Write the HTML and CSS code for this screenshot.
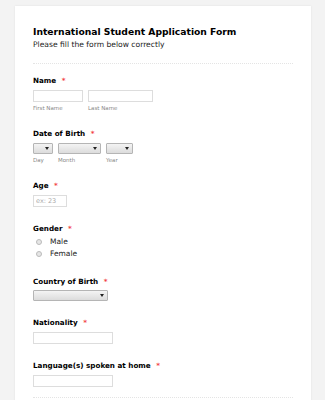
FILE: index.html
```html
<!DOCTYPE html>
<html>

<head>
    <meta charset="utf-8">
    <title>International Student Application Form</title>
    <meta name="viewport" content="width=device-width, initial-scale=1">
    <link rel="stylesheet" href="styles.css">
</head>

<body>
    <div class="form-all">
        <div class="form-header">
            <h1 class="form-title">International Student Application Form</h1>
            <div class="form-subtitle">Please fill the form below correctly</div>
        </div>

        <ul class="form-section">
            <li class="form-line">
                <label class="form-label">Name <span class="req">*</span></label>
                <div class="form-row">
                    <div class="sub">
                        <input class="form-text w-first" type="text">
                        <span class="sublabel">First Name</span>
                    </div>
                    <div class="sub">
                        <input class="form-text w-last" type="text">
                        <span class="sublabel">Last Name</span>
                    </div>
                </div>
            </li>

            <li class="form-line">
                <label class="form-label">Date of Birth <span class="req">*</span></label>
                <div class="form-row">
                    <div class="sub">
                        <span class="form-select w-day"><i class="arrow"></i></span>
                        <span class="sublabel">Day</span>
                    </div>
                    <div class="sub">
                        <span class="form-select w-month"><i class="arrow"></i></span>
                        <span class="sublabel">Month</span>
                    </div>
                    <div class="sub">
                        <span class="form-select w-year"><i class="arrow"></i></span>
                        <span class="sublabel">Year</span>
                    </div>
                </div>
            </li>

            <li class="form-line">
                <label class="form-label">Age <span class="req">*</span></label>
                <input class="form-text w-age" type="text" placeholder="ex: 23">
            </li>

            <li class="form-line">
                <label class="form-label tight">Gender <span class="req">*</span></label>
                <div class="radio-list">
                    <label class="radio"><span class="dot"></span>Male</label>
                    <label class="radio"><span class="dot"></span>Female</label>
                </div>
            </li>

            <li class="form-line">
                <label class="form-label select-label">Country of Birth <span class="req">*</span></label>
                <span class="form-select w-country"><i class="arrow"></i></span>
            </li>

            <li class="form-line">
                <label class="form-label">Nationality <span class="req">*</span></label>
                <input class="form-text w-wide" type="text">
            </li>

            <li class="form-line">
                <label class="form-label">Language(s) spoken at home <span class="req">*</span></label>
                <input class="form-text w-wide" type="text">
            </li>
        </ul>
        <div class="divider"></div>
    </div>
</body>

</html>
```

FILE: styles.css
```css
* {
    margin: 0;
    padding: 0;
    list-style: none;
    box-sizing: border-box;
}

body {
    background: #f3f3f3;
    font-family: "DejaVu Sans", Verdana, sans-serif;
    color: #111;
    padding: 6px 14px 0 15px;
}

.form-all {
    background: #fff;
    box-shadow: 0 0 2px rgba(0, 0, 0, 0.08);
    padding: 20px 18px 0 18px;
    min-height: 420px;
}

.form-header {
    padding-bottom: 12px;
    border-bottom: 1px dotted #e4e4e4;
}

.form-title {
    font-size: 9.2px;
    font-weight: bold;
    line-height: 12px;
    color: #000;
}

.form-subtitle {
    font-size: 7.6px;
    line-height: 12px;
    color: #222;
    margin-top: 1px;
}

.form-section {
    padding-top: 12px;
}

.form-line {
    margin-bottom: 17px;
}

.form-label {
    display: block;
    font-size: 7.2px;
    font-weight: bold;
    line-height: 10px;
    margin-bottom: 4px;
    color: #000;
}

.form-label.tight {
    margin-bottom: 2px;
}

.form-label.select-label {
    margin-bottom: 3px;
}

.req {
    color: #f23a3c;
    margin-left: 3px;
}

.form-row {
    display: flex;
    gap: 5px;
}

.sub {
    display: flex;
    flex-direction: column;
}

.sublabel {
    font-size: 5.5px;
    color: #888;
    margin-top: 2px;
    line-height: 8px;
}

.form-text {
    display: block;
    height: 12px;
    border: 1px solid #ddd;
    background: #fff;
    font-family: inherit;
    font-size: 6.5px;
    padding: 0 2px;
    outline: none;
}

.form-text::placeholder {
    color: #aaa;
}

.w-first { width: 50px; }
.w-last { width: 65px; }
.w-age { width: 34px; }
.w-wide { width: 80px; }

.form-select {
    display: block;
    position: relative;
    height: 11px;
    border: 1px solid #b5b5b5;
    border-radius: 1px;
    background: linear-gradient(#f4f4f4, #dcdcdc);
}

.arrow {
    position: absolute;
    right: 3px;
    top: 3px;
    border-left: 2px solid transparent;
    border-right: 2px solid transparent;
    border-top: 3px solid #222;
}

.w-day { width: 20px; }
.w-month { width: 43px; }
.w-year { width: 27px; }
.w-country { width: 75px; }

.radio-list {
    padding-left: 3px;
    margin-bottom: 4px;
}

.radio {
    display: flex;
    align-items: center;
    font-size: 7.5px;
    line-height: 12px;
    color: #222;
}

.dot {
    width: 6px;
    height: 6px;
    border-radius: 50%;
    border: 1px solid #bbb;
    background: #e6e6e6;
    margin-right: 8px;
}

.divider {
    border-top: 1px dotted #e4e4e4;
    margin-top: -7px;
}
```
